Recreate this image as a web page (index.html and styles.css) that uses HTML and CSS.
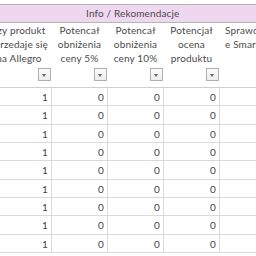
FILE: index.html
```html
<!DOCTYPE html>
<html>
<head>
<meta charset="utf-8">
<link rel="stylesheet" href="styles.css">
</head>
<body>
<div class="sheet">
  <div class="band"><span class="band-title">Info / Rekomendacje</span></div>
  <div class="grid head">
    <div class="hcell"><div class="lbl">czy produkt<br>sprzedaje się<br>na Allegro</div><span class="dd"></span></div>
    <div class="hcell"><div class="lbl">Potencał<br>obniżenia<br>ceny 5%</div><span class="dd"></span></div>
    <div class="hcell"><div class="lbl">Potencał<br>obniżenia<br>ceny 10%</div><span class="dd"></span></div>
    <div class="hcell"><div class="lbl">Potencjał<br>ocena<br>produktu</div><span class="dd"></span></div>
    <div class="hcell last"><div class="lbl">Sprawdź<br>e Smart</div></div>
  </div>
  <div class="grid row"><div class="cell">1</div><div class="cell">0</div><div class="cell">0</div><div class="cell">0</div><div class="cell end"></div></div>
  <div class="grid row"><div class="cell">1</div><div class="cell">0</div><div class="cell">0</div><div class="cell">0</div><div class="cell end"></div></div>
  <div class="grid row"><div class="cell">1</div><div class="cell">0</div><div class="cell">0</div><div class="cell">0</div><div class="cell end"></div></div>
  <div class="grid row"><div class="cell">1</div><div class="cell">0</div><div class="cell">0</div><div class="cell">0</div><div class="cell end"></div></div>
  <div class="grid row"><div class="cell">1</div><div class="cell">0</div><div class="cell">0</div><div class="cell">0</div><div class="cell end"></div></div>
  <div class="grid row"><div class="cell">1</div><div class="cell">0</div><div class="cell">0</div><div class="cell">0</div><div class="cell end"></div></div>
  <div class="grid row"><div class="cell">1</div><div class="cell">0</div><div class="cell">0</div><div class="cell">0</div><div class="cell end"></div></div>
  <div class="grid row"><div class="cell">1</div><div class="cell">0</div><div class="cell">0</div><div class="cell">0</div><div class="cell end"></div></div>
  <div class="grid row"><div class="cell">1</div><div class="cell">0</div><div class="cell">0</div><div class="cell">0</div><div class="cell end"></div></div>
</div>
</body>
</html>
```
FILE: styles.css
```css
html, body {
  margin: 0;
  padding: 0;
  background: #ffffff;
  overflow: hidden;
}
body {
  width: 256px;
  height: 256px;
  font-family: Lato, "Open Sans", "Liberation Sans", sans-serif;
  font-size: 10px;
  letter-spacing: 0.15px;
  color: #4a4a4a;
}
.sheet {
  padding-top: 4px;
}
.band {
  height: 17px;
  background: #efd8ef;
  border-top: 1px solid #b5b5b5;
  border-bottom: 1px solid #b5b5b5;
  padding-left: 86px;
  line-height: 17px;
  color: #4a4a4a;
}
.grid {
  display: grid;
  grid-template-columns: 65px 56px 56px 56px 1fr;
  margin-left: -13px;
}
.head {
  height: 64px;
  border-bottom: 1px solid #d0d0d0;
}
.hcell {
  display: flex;
  flex-direction: column;
  align-items: center;
  padding: 0 1px 6px 0;
  line-height: 14px;
  text-align: center;
  white-space: nowrap;
}
.hcell.last {
  align-items: flex-start;
  text-align: left;
  padding-left: 5px;
}
.lbl {
  flex: 1;
}
.dd {
  align-self: flex-end;
  width: 11px;
  height: 11px;
  border: 1px solid #b0b0b0;
  background: linear-gradient(#fbfbfb, #ededed);
  position: relative;
}
.dd::after {
  content: "";
  position: absolute;
  left: 3px;
  top: 5px;
  border-left: 2.5px solid transparent;
  border-right: 2.5px solid transparent;
  border-top: 3px solid #666;
}
.row {
  height: 18.33px;
  box-sizing: border-box;
  border-bottom: 1px solid #dadada;
}
.cell {
  border-right: 1px solid #dadada;
  text-align: right;
  padding-right: 3px;
  line-height: 18px;
  color: #444;
}
.cell.end {
  border-right: none;
}
```
